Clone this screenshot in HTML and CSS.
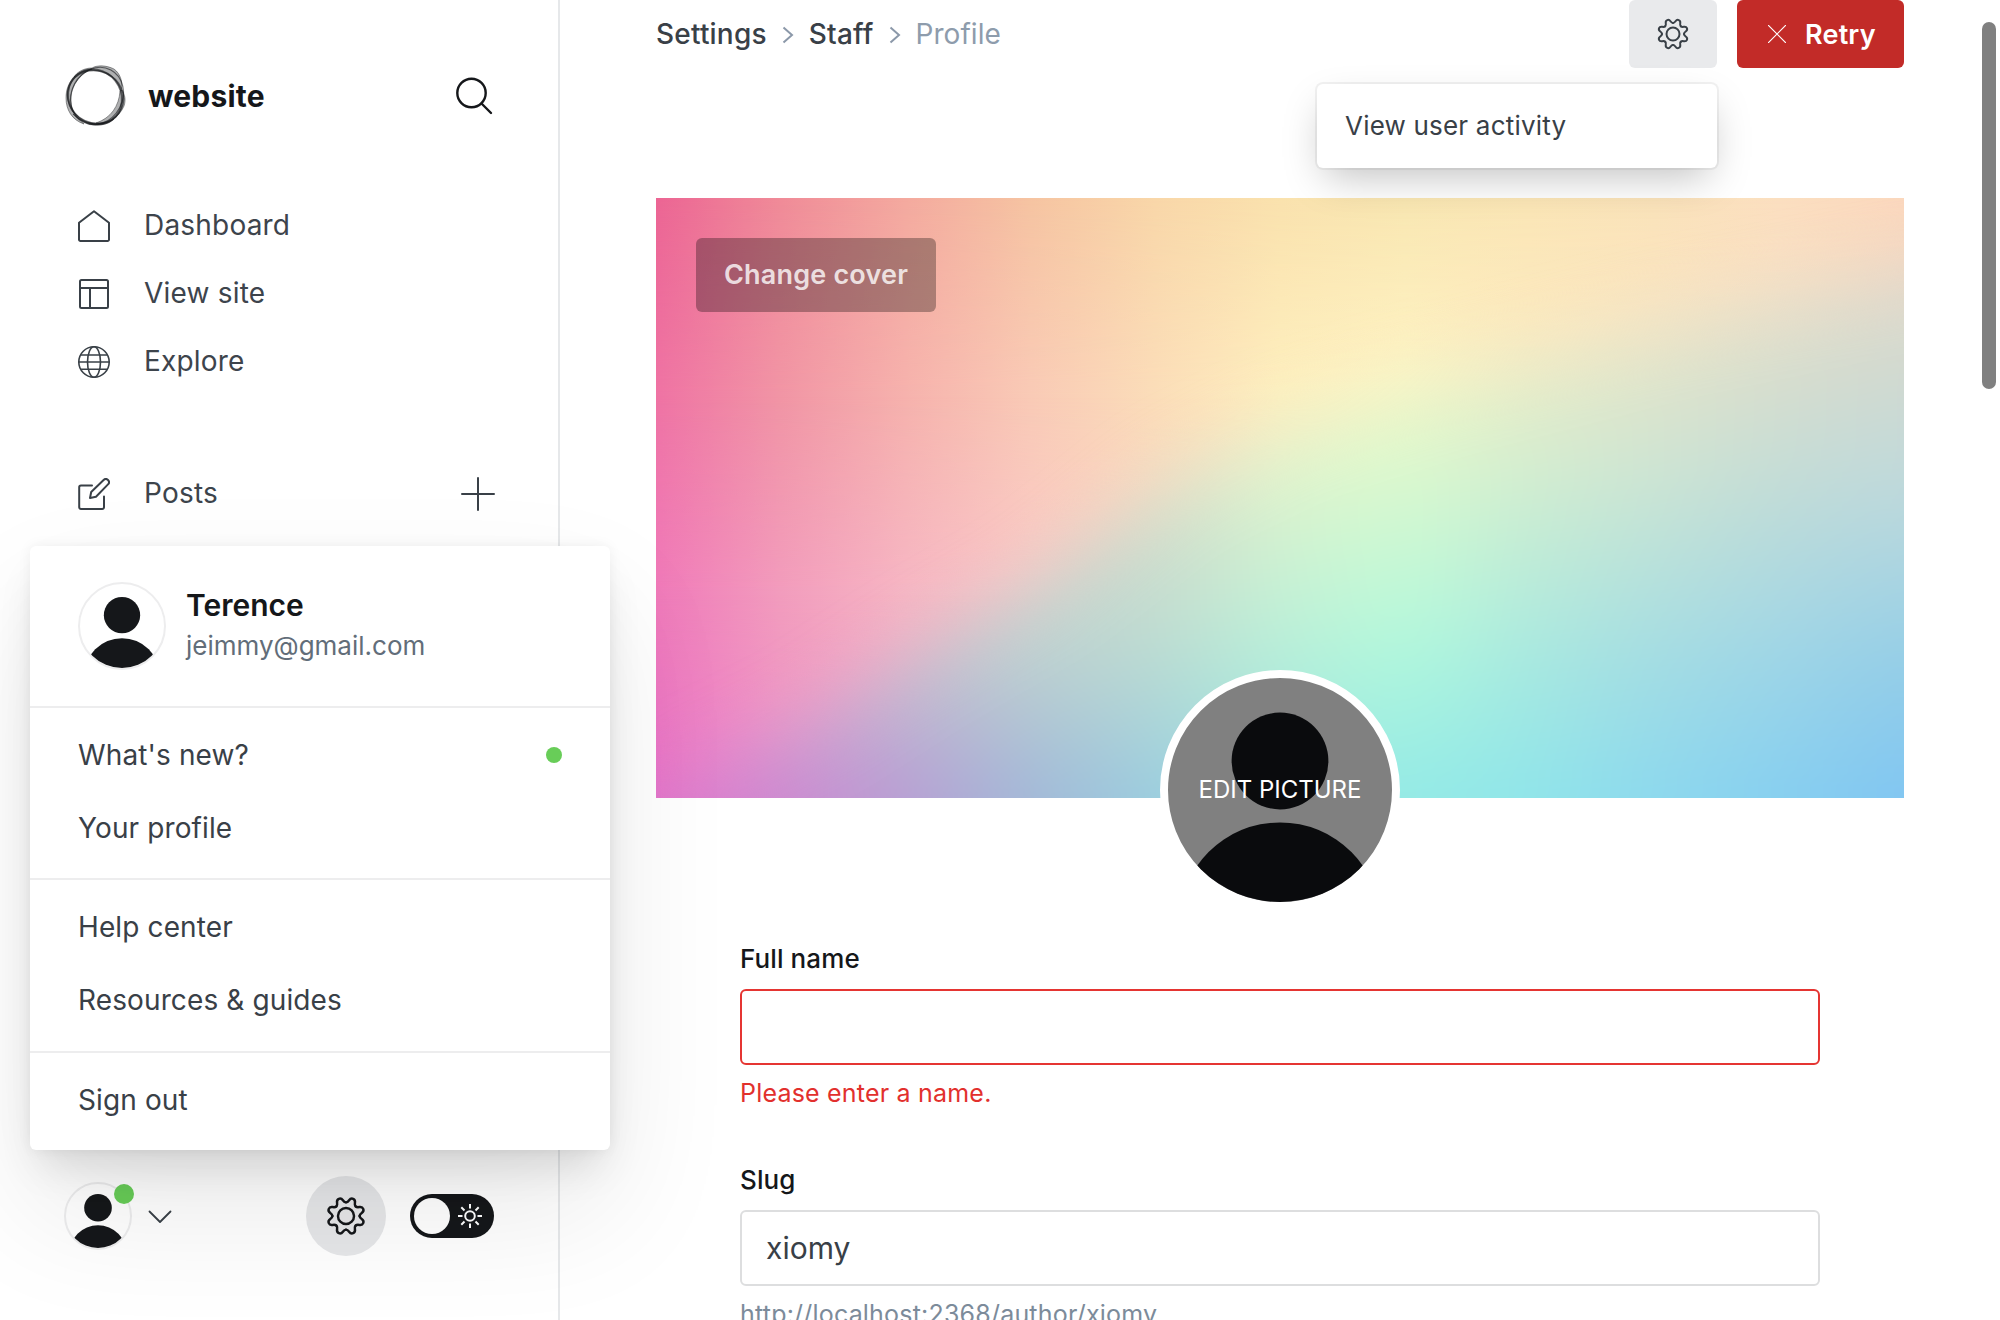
FILE: index.html
```html
<!DOCTYPE html>
<html lang="en">
<head>
<meta charset="utf-8">
<title>Profile</title>
<link rel="stylesheet" href="styles.css">
</head>
<body>
<svg class="defs" width="0" height="0" aria-hidden="true">
  <defs>
    <path id="tooth" d="M-4.2-10.2C-1.5-11.300-3.700-15.100 0-15.100S1.500-11.300 4.200-10.200"/>
    <symbol id="gear" viewBox="-17 -17 34 34">
      <g fill="none" stroke="currentColor" stroke-width="2" stroke-linecap="round">
        <circle r="6.5"/>
        <use href="#tooth" transform="rotate(22.5)"/>
        <use href="#tooth" transform="rotate(67.5)"/>
        <use href="#tooth" transform="rotate(112.5)"/>
        <use href="#tooth" transform="rotate(157.5)"/>
        <use href="#tooth" transform="rotate(202.5)"/>
        <use href="#tooth" transform="rotate(247.5)"/>
        <use href="#tooth" transform="rotate(292.5)"/>
        <use href="#tooth" transform="rotate(337.5)"/>
      </g>
    </symbol>
    <symbol id="person" viewBox="0 0 112 112">
      <circle cx="56" cy="41.5" r="24.2"/>
      <circle cx="56" cy="122.7" r="50.5"/>
    </symbol>
  </defs>
</svg>

<div class="app">
  <aside class="sidebar">
    <header class="site">
      <svg class="site-logo" viewBox="0 0 64 64" width="64" height="64" fill="#15171a">
        <g fill-opacity=".34" stroke="#15171a" stroke-width=".7" stroke-opacity=".6">
          <ellipse cx="31" cy="33" rx="28.500" ry="26" transform="rotate(52 31 33)" fill="none" stroke-width="2"/>
          <ellipse cx="33" cy="32" rx="29.500" ry="25.500" transform="rotate(-62 33 32)" fill="none" stroke-width="1.200"/>
          <ellipse cx="31.500" cy="33" rx="28.500" ry="26" transform="rotate(24 31.500 33)" fill="none" stroke-width="1.400"/>
          <path d="M10 13C20 4 30 6 36 7C45 9 53 15 57 27C59 19 57 10 50 5C42 1 33 1 28 4C20 4 13 8 10 13Z"/>
          <path d="M56 27C55 42 47 54 32 59C42 61 55 54 60 42C62 36 61 31 58 26Z"/>
          <path d="M28 5C12 7 2 18 2 34C2 46 8 56 20 60C10 52 6 44 7 33C8 20 17 9 28 5Z"/>
          <path d="M9 50C20 61 38 62 50 55C42 63 22 64 9 50Z" fill-opacity=".7"/>
        </g>
      </svg>
      <span class="site-name">website</span>
      <svg class="site-search" viewBox="0 0 38 38" width="38" height="38" fill="none" stroke="#15171a" stroke-width="2.400" stroke-linecap="round"><circle cx="16.500" cy="16" r="14.200"/><path d="M26.500 26.500L36 36"/></svg>
    </header>

    <nav class="nav">
      <a class="nav-item"><svg viewBox="0 0 32 32" width="32" height="32"><path d="M1 12.800L16 1.200L31 12.800V29.500a1.500 1.500 0 0 1-1.500 1.500H2.500A1.500 1.500 0 0 1 1 29.500Z"/></svg><span>Dashboard</span></a>
      <a class="nav-item"><svg viewBox="0 0 32 32" width="32" height="32"><rect x="2" y="2" width="28" height="28" rx="1.500"/><path d="M2 10H30M12 10V30"/></svg><span>View site</span></a>
      <a class="nav-item"><svg viewBox="0 0 32 32" width="32" height="32" class="thin"><circle cx="16" cy="16" r="15.200"/><ellipse cx="16" cy="16" rx="6.500" ry="15.200"/><path d="M1 16H31M3 9H29M3 23.300H29"/></svg><span>Explore</span></a>
    </nav>
    <nav class="nav nav-content">
      <a class="nav-item"><svg viewBox="0 0 32 32" width="32" height="32"><path d="M14 7.500H3A1.800 1.800 0 0 0 1.200 9.300V29.200A1.800 1.800 0 0 0 3 31H24.200A1.800 1.800 0 0 0 26 29.200V18.500"/><path d="M12 20L13.200 14L25.600 2a3.100 3.100 0 0 1 4.400 4.400L18 18.800Z"/></svg><span>Posts</span>
        <svg class="nav-add" viewBox="0 0 34 34" width="34" height="34"><path d="M17 1V33M1 17H33"/></svg></a>
    </nav>

    <footer class="account">
      <span class="avatar avatar-small"><svg class="person"><use href="#person"/></svg><i class="dot account-dot"></i></span>
      <svg class="account-caret" viewBox="0 0 24 14" width="24" height="14" fill="none" stroke="#394047" stroke-width="1.800" stroke-linecap="round" stroke-linejoin="round"><path d="M1.500 1.500L12 12L22.500 1.500"/></svg>
      <span class="account-settings"><svg width="42" height="42"><use href="#gear"/></svg></span>
      <span class="theme-toggle">
        <i class="theme-knob"></i>
        <svg viewBox="-12 -12 24 24" width="24" height="24" fill="none" stroke="#fff" stroke-width="2"><circle r="4.800"/><path d="M0-12V-7.500M0 12V7.500M-12 0H-7.500M12 0H7.500M-8.700-8.700L-5.500-5.500M8.700 8.700L5.500 5.500M-8.700 8.700L-5.500 5.500M8.700-8.700L5.500-5.500"/></svg>
      </span>
    </footer>
  </aside>

  <main class="main">
    <header class="toolbar">
      <h2 class="crumbs">
        <a>Settings</a>
        <svg viewBox="0 0 12 18" width="12" height="18"><path d="M1.500 1.500L10 9L1.500 16.500"/></svg>
        <a>Staff</a>
        <svg viewBox="0 0 12 18" width="12" height="18"><path d="M1.500 1.500L10 9L1.500 16.500"/></svg>
        <span>Profile</span>
      </h2>
      <div class="actions">
        <span class="btn-icon"><svg width="34" height="34"><use href="#gear"/></svg></span>
        <span class="btn-retry"><svg viewBox="0 0 18 18" width="18" height="18" fill="none" stroke="#fff" stroke-width="1.200"><path d="M0 0L18 18M18 0L0 18"/></svg>Retry</span>
        <div class="dropdown">View user activity</div>
      </div>
    </header>

    <section class="cover">
      <div class="mesh">
        <div class="layer">
          <i class="band warm-0"></i><i class="band warm-1"></i><i class="band warm-2"></i><i class="band warm-3"></i>
        </div>
        <div class="layer soft">
          <div class="layer-shape">
            <i class="band cool-0"></i><i class="band cool-1"></i><i class="band cool-2"></i><i class="band cool-3"></i><i class="band cool-4"></i>
          </div>
        </div>
      </div>
      <span class="cover-button">Change cover</span>
      <div class="picture"><svg class="person"><use href="#person"/></svg><span>EDIT PICTURE</span></div>
    </section>

    <form class="form">
      <div class="field">
        <label>Full name</label>
        <div class="input input-error"></div>
        <p class="error">Please enter a name.</p>
      </div>
      <div class="field">
        <label>Slug</label>
        <div class="input">xiomy</div>
        <p class="hint">http://localhost:2368/author/xiomy</p>
      </div>
    </form>
  </main>

  <div class="menu">
    <div class="menu-user">
      <span class="avatar"><svg class="person"><use href="#person"/></svg></span>
      <div><strong>Terence</strong><span>jeimmy@gmail.com</span></div>
    </div>
    <ul class="menu-group"><li>What's new?<i class="dot"></i></li><li>Your profile</li></ul>
    <ul class="menu-group menu-group-help"><li>Help center</li><li>Resources &amp; guides</li></ul>
    <ul class="menu-group"><li>Sign out</li></ul>
  </div>
  <i class="scroll-thumb"></i>
</div>
</body>
</html>
```
FILE: styles.css
```css
* { box-sizing: border-box; }
body {
  margin: 0;
  width: 2000px;
  height: 1320px;
  overflow: hidden;
  background: #fff;
  color: #394047;
  font-family: Inter, sans-serif;
  font-optical-sizing: none;
  font-size: 28px;
  letter-spacing: .2px;
}
.defs { position: absolute; }
.app { position: relative; display: flex; width: 2000px; height: 1320px; overflow: hidden; }
svg { display: block; flex: none; }

/* Sidebar */
.sidebar {
  width: 560px;
  height: 1320px;
  flex: none;
  display: flex;
  flex-direction: column;
  border-right: 2px solid #e6e8ea;
}
.site { display: flex; align-items: center; height: 64px; margin: 64px 65px 0 64px; }
.site-name { margin-left: 20px; color: #15171a; font-size: 30px; font-weight: 700; }
.site-search { margin-left: auto; }
.nav { margin: 64px 63px 0 78px; }
.nav-item { display: flex; align-items: center; height: 68px; }
.nav-item svg { fill: none; stroke: #394047; stroke-width: 2; stroke-linejoin: round; stroke-linecap: round; }
.nav-item svg.thin { stroke-width: 1.6; }
.nav-item span { margin: 0 0 2px 34px; color: #3d444c; }
.nav-item .nav-add { margin-left: auto; }
.account { display: flex; align-items: center; height: 80px; margin: auto 64px 64px 64px; }
.account-caret { margin: 2px 0 0 16px; }
.account-settings {
  display: grid; place-items: center;
  width: 80px; height: 80px; margin-left: auto;
  border-radius: 50%; background: #e6e7e9; color: #15171a;
}
.theme-toggle {
  display: flex; align-items: center; gap: 8px;
  width: 84px; height: 44px; margin-left: 24px; padding-left: 4px;
  border-radius: 22px; background: #15171a;
}
.theme-knob { width: 36px; height: 36px; border-radius: 50%; background: #fff; }

.avatar {
  position: relative; flex: none;
  width: 88px; height: 88px;
  border: 2px solid #ededee; border-radius: 50%; background: #fff;
}
.avatar-small { width: 68px; height: 68px; }
.person { width: 100%; height: 100%; border-radius: 50%; overflow: hidden; fill: #15171a; }
.dot { width: 16px; height: 16px; border-radius: 50%; background: #68cd58; }
.account-dot { position: absolute; top: 0; right: -4px; width: 20px; height: 20px; }

/* Account menu */
.menu {
  position: absolute; left: 30px; top: 546px;
  width: 580px; height: 604px;
  border-radius: 6px; background: #fff;
  box-shadow: 0 0 14px rgba(0,0,0,.06), 0 24px 40px -10px rgba(0,0,0,.12), 0 60px 130px rgba(0,0,0,.09);
}
.menu-user { display: flex; gap: 20px; height: 160px; padding: 36px 48px 0; }
.menu-user strong { display: block; margin-top: 5px; color: #15171a; font-size: 30px; font-weight: 600; line-height: 36px; letter-spacing: 0; }
.menu-user div > span { display: block; margin-top: 5px; color: #626d79; font-size: 26px; line-height: 36px; letter-spacing: 0; }
.menu-group { margin: 0; padding: 10px 48px 14px; border-top: 2px solid #ededee; list-style: none; letter-spacing: .12px; }
.menu-group li { display: flex; align-items: center; justify-content: space-between; height: 73px; }
.menu-group-help li + li { height: 74px; }

/* Main column */
.main { flex: 1; padding: 0 96px; }
.toolbar { display: flex; justify-content: space-between; height: 68px; }
.crumbs { display: flex; align-items: center; margin: 0; font-size: 28px; font-weight: 500; }
.crumbs svg { margin: 2px 15px 0 15px; fill: none; stroke: #8b98a9; stroke-width: 2; }
.crumbs span { color: #8e9cac; font-weight: 400; letter-spacing: .05px; }
.actions { position: relative; display: flex; gap: 20px; }
.btn-icon { display: grid; place-items: center; width: 88px; height: 68px; border-radius: 6px; background: #e9eaec; }
.btn-retry {
  display: flex; align-items: center; gap: 19px;
  width: 167px; height: 68px; padding-left: 31px;
  border-radius: 6px; background: #c22b28; color: #fff;
  font-size: 27px; font-weight: 600; letter-spacing: .2px;
}
.dropdown {
  position: absolute; z-index: 2; right: 187px; top: 84px;
  width: 400px; height: 84px; padding-left: 28px;
  border-radius: 6px; background: #fff;
  font-size: 26px; line-height: 84px;
  box-shadow: 0 0 0 2px rgba(0,0,0,.05), 0 16px 40px -8px rgba(0,0,0,.25);
}

/* Cover artwork: horizontal gradients cross-faded vertically. The cool layer
   overlaps the warm one below a soft diagonal edge and bleeds 120px outside. */
.cover { position: relative; height: 600px; margin-top: 130px; padding: 40px; }
.mesh { position: absolute; inset: 0; overflow: hidden; }
.layer, .layer-shape, .band { position: absolute; inset: 0; }
.soft { inset: -120px; filter: blur(34px); }
.layer-shape {
  clip-path: polygon(1488px 170px, 1368px 191px, 1118px 243px, 900px 299px, 750px 346px, 632px 404px, 569px 454px, 502px 506px, 386px 572px, 270px 646px, 157px 700px, 120px 732px, 0 796px, 0 840px, 1488px 840px);
}
.warm-0 { background: linear-gradient(90deg, #ec6594, #f08b98, #f4aa9f, #f6c4a2, #f9d7a9, #fae2ae, #f9e7b2, #fbe6b6, #fae3ba, #fbdfc0, #fbd8be); }
.warm-1 { background: linear-gradient(90deg, #ef73a4, #f195a5, #f6b2ad, #f9cab6, #fbddb9, #feefbf, #fff4c6, #fdebc4, #fde6c6, #fbe2c8, #f9dcc8); -webkit-mask-image: linear-gradient(transparent 0, #000 33%); }
.warm-2 { background: linear-gradient(90deg, #f07aba, #f29cbd, #f6b6c4, #fac9c8, #fcd8ca, #fde6cc, #fdeccc, #fdebc8, #fde6c6, #fbe2c8, #f9dcc8); -webkit-mask-image: linear-gradient(transparent 33%, #000 66%); }
.warm-3 { background: linear-gradient(90deg, #ea75cb, #ee94cb, #f2aacd, #f4bccf, #f4c8d0, #fde6cc, #fdeccc, #fdebc8, #fde6c6, #fbe2c8, #f9dcc8); -webkit-mask-image: linear-gradient(transparent 66%, #000 100%); }
.cool-0 { background: linear-gradient(90deg, #e8d8c6 120px, #e8d8c6, #e8d8c6, #ead8c6, #ecdcc6, #f9edc2, #fbeec0, #f7eac2, #f5e4c6, #efdfc8, #ebd8c8 1368px); }
.cool-1 { background: linear-gradient(90deg, #d8c8c8 120px, #d8c8c8, #d8c8c8, #dccfc8, #e6dcc8, #fbf0c4, #f7f4c4, #eeebc6, #e6e4c9, #dddecc, #d5d9ce 1368px); -webkit-mask-image: linear-gradient(transparent 120px, #000 270px); }
.cool-2 { background: linear-gradient(90deg, #ccb8d0 120px, #ccb8d0, #ccc4cc, #d2cec8, #d8dcca, #dcf3ce, #d5fad0, #cdedd2, #c8e4d5, #c0dcd8, #bcd9dd 1368px); -webkit-mask-image: linear-gradient(transparent 270px, #000 420px); }
.cool-3 { background: linear-gradient(90deg, #d0a4d0 120px, #ccb2d0, #c6c2ce, #c0d2d0, #bcdcd2, #b8efd9, #b1f9dc, #aae9df, #a6dde2, #a0d6e6, #97cfe6 1368px); -webkit-mask-image: linear-gradient(transparent 420px, #000 570px); }
.cool-4 { background: linear-gradient(90deg, #de76cc 120px, #cd88d0, #b79fd4, #a1b8d8, #9accdf, #98e3e4, #93eae6, #8fe5ea, #8cd8ee, #86cff0, #80c5f2 1368px); -webkit-mask-image: linear-gradient(transparent 570px, #000 720px); }
.cover-button {
  position: relative; display: block;
  width: 240px; height: 74px;
  border-radius: 6px; background: rgba(0,0,0,.3); color: rgba(255,255,255,.8);
  font-size: 27px; font-weight: 600; line-height: 74px; text-align: center; letter-spacing: .2px;
}
.picture {
  position: absolute; left: 504px; top: 472px;
  width: 240px; height: 240px;
  border: 8px solid #fff; border-radius: 50%; background: #808080;
}
.picture .person { fill: #0a0b0d; }
.picture span {
  position: absolute; inset: 0;
  color: #fff; font-size: 24px; line-height: 224px; text-align: center; letter-spacing: 0;
}

.form { display: flex; flex-direction: column; gap: 57px; margin: 146px 84px 0; }
.field label { display: block; color: #15171a; font-size: 26px; font-weight: 500; line-height: 30px; letter-spacing: .1px; }
.input {
  height: 76px; margin-top: 15px; padding: 0 24px;
  border: 2px solid #dddedf; border-radius: 6px;
  font-size: 30px; line-height: 72px; letter-spacing: 0;
}
.input-error { border-color: #e53532; }
.error, .hint { margin: 13px 0 0; font-size: 25px; line-height: 30px; }
.error { color: #e2302d; }
.hint { color: #7c8b9a; }

.scroll-thumb { position: absolute; left: 1982px; top: 22px; width: 14px; height: 367px; border-radius: 7px; background: #808080; }
```
